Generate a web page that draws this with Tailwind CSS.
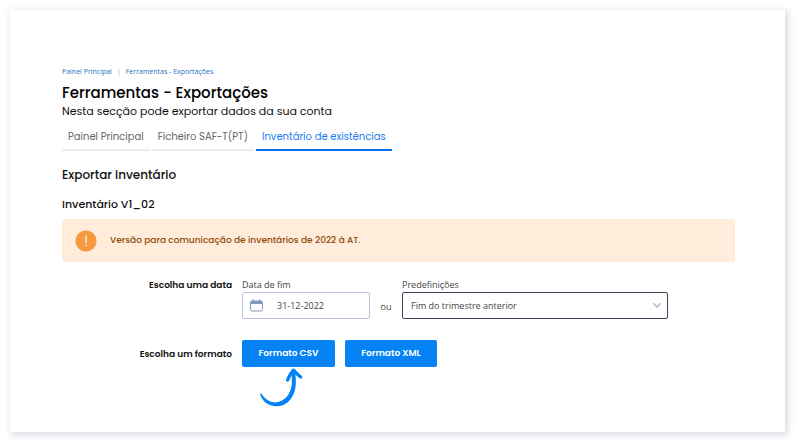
<!DOCTYPE html>
<html lang="pt">
<head>
    <meta charset="UTF-8">
    <meta name="viewport" content="width=device-width, initial-scale=1.0">
    <title>Ferramentas - Exportações</title>
    <script src="https://cdn.jsdelivr.net/npm/@tailwindcss/browser@4"></script>
</head>
<body class="min-h-screen bg-white font-['Poppins','Inter',sans-serif] text-[#111]">
    <div class="pt-[10px] pl-[10px] pr-[15px] pb-[15px] min-h-screen flex">
        <main class="flex-1 bg-white pt-14 pl-[52px] pr-[50px] pb-6 shadow-[2px_2px_7px_1px_rgba(60,80,110,0.2)]">
            <!-- breadcrumb -->
            <nav class="flex items-center gap-[5px] text-[7px] leading-[12px] font-['Open_Sans',sans-serif] text-[#1f6fc4]">
                <a href="#">Painel Principal</a>
                <span class="text-gray-400">|</span>
                <a href="#">Ferramentas - Exportações</a>
            </nav>
            <h1 class="mt-1 text-[15px] leading-[22px] font-medium text-black">Ferramentas - Exportações</h1>
            <p class="text-[11px] leading-[14px]">Nesta secção pode exportar dados da sua conta</p>

            <!-- tabs -->
            <div class="mt-2 flex gap-[2px] text-[10px] leading-[21px] text-[#666]">
                <a href="#" class="px-[6px] pb-[2px] border-b-2 border-[#ececec]">Painel Principal</a>
                <a href="#" class="px-[6px] pb-[2px] border-b-2 border-[#ececec]">Ficheiro SAF-T(PT)</a>
                <a href="#" class="px-[6px] pb-[2px] border-b-2 border-[#0a74f0] text-[#1a7cf2]">Inventário de existências</a>
            </div>

            <h2 class="mt-4 text-[12px] leading-[16px] font-medium">Exportar inventário</h2>
            <h3 class="mt-[14px] text-[11px] leading-[14px] font-medium">Inventário V1_02</h3>

            <!-- warning -->
            <div class="mt-2 h-[43px] px-[13px] flex items-center gap-[13px] rounded-[3px] bg-[#ffecda]">
                <svg class="w-[22px] h-[22px]" viewBox="0 0 22 22">
                    <circle cx="11" cy="11" r="10.6" fill="#f59a40"/>
                    <path d="M11 6v6.5" stroke="#ffecda" stroke-width="1.4" stroke-linecap="round"/>
                    <circle cx="11" cy="15.4" r="0.9" fill="#ffecda"/>
                </svg>
                <p class="text-[9px] font-medium text-[#8f4a08]">Versão para comunicação de inventários de 2022 à AT.</p>
            </div>

            <form onsubmit="return false">
                <div class="mt-4 flex gap-[10px]">
                    <span class="w-[170px] text-right text-[9px] leading-[14px] font-semibold">Escolha uma data</span>
                    <div class="font-['Open_Sans',sans-serif] text-[9px] text-[#444] flex-1 flex items-end">
                        <div class="w-[128px]">
                            <label for="data-fim" class="block leading-[14px]">Data de fim</label>
                            <div class="relative">
                                <input id="data-fim" type="text" value="31-12-2022" class="w-full h-[27px] pl-[34px] border border-[#b7c3dc] rounded-[2px] bg-white">
                                <svg class="absolute left-2 top-[7px] w-[13px] h-[13px]" viewBox="0 0 13 13" fill="none">
                                    <rect x="0.6" y="2" width="11.8" height="10" rx="1.4" stroke="#8595bb"/>
                                    <path d="M0.6 5V3.2Q0.6 2 1.8 2h9.4q1.2 0 1.2 1.2V5z" fill="#8595bb"/>
                                    <path d="M3.3 0.6v2M9.7 0.6v2" stroke="#8595bb" stroke-width="1.3"/>
                                </svg>
                            </div>
                        </div>
                        <span class="w-8 text-center leading-[24px]">ou</span>
                        <div class="w-[266px]">
                            <label for="predef" class="block leading-[14px]">Predefinições</label>
                            <div class="relative">
                                <select id="predef" class="appearance-none w-full h-[27px] px-2 border border-[#3d4458] rounded-[2px] bg-white">
                                    <option>Fim do trimestre anterior</option>
                                </select>
                                <svg class="absolute right-[6px] top-[10px] w-[10px] h-[7px] pointer-events-none" viewBox="0 0 10 7" fill="none">
                                    <path d="M1.5 1.5L5 5l3.5-3.5" stroke="#b3c0dc" stroke-width="1.6" stroke-linecap="round"/>
                                </svg>
                            </div>
                        </div>
                    </div>
                </div>

                <div class="mt-[21px] flex items-center gap-[10px]">
                    <span class="w-[170px] text-right text-[9px] leading-[14px] font-semibold">Escolha um formato</span>
                    <div class="relative flex gap-[10px] text-[9px] font-semibold text-white">
                        <button type="submit" class="w-[93px] h-[27px] rounded-[2px] bg-[#0583f5]">Formato CSV</button>
                        <button type="submit" class="w-[92px] h-[27px] rounded-[2px] bg-[#0583f5]">Formato XML</button>
                        <!-- hand drawn arrow under the CSV button -->
                        <svg class="absolute left-[17px] top-[27px] w-[44px] h-[40px]" viewBox="0 0 44 40">
                            <path d="M1.2 27.6Q0.8 26.2 2.2 26.6Q8 35.6 16.5 35.4C26 35 32.2 26 32.8 17L32.8 5L36.2 5C37.2 13 37.2 19.5 35.4 25C32 34.5 25.5 39.3 17.5 39.3C9 39.3 3.5 34.5 1.2 27.6Z" fill="#0583f5"/>
                            <path d="M28.600 13C30 9.4 32 5.900 34.400 3.200C36.500 5.600 39 8 41.600 10" fill="none" stroke="#0583f5" stroke-width="3.4" stroke-linecap="round" stroke-linejoin="round"/>
                        </svg>
                    </div>
                </div>
            </form>
        </main>
    </div>
</body>
</html>
